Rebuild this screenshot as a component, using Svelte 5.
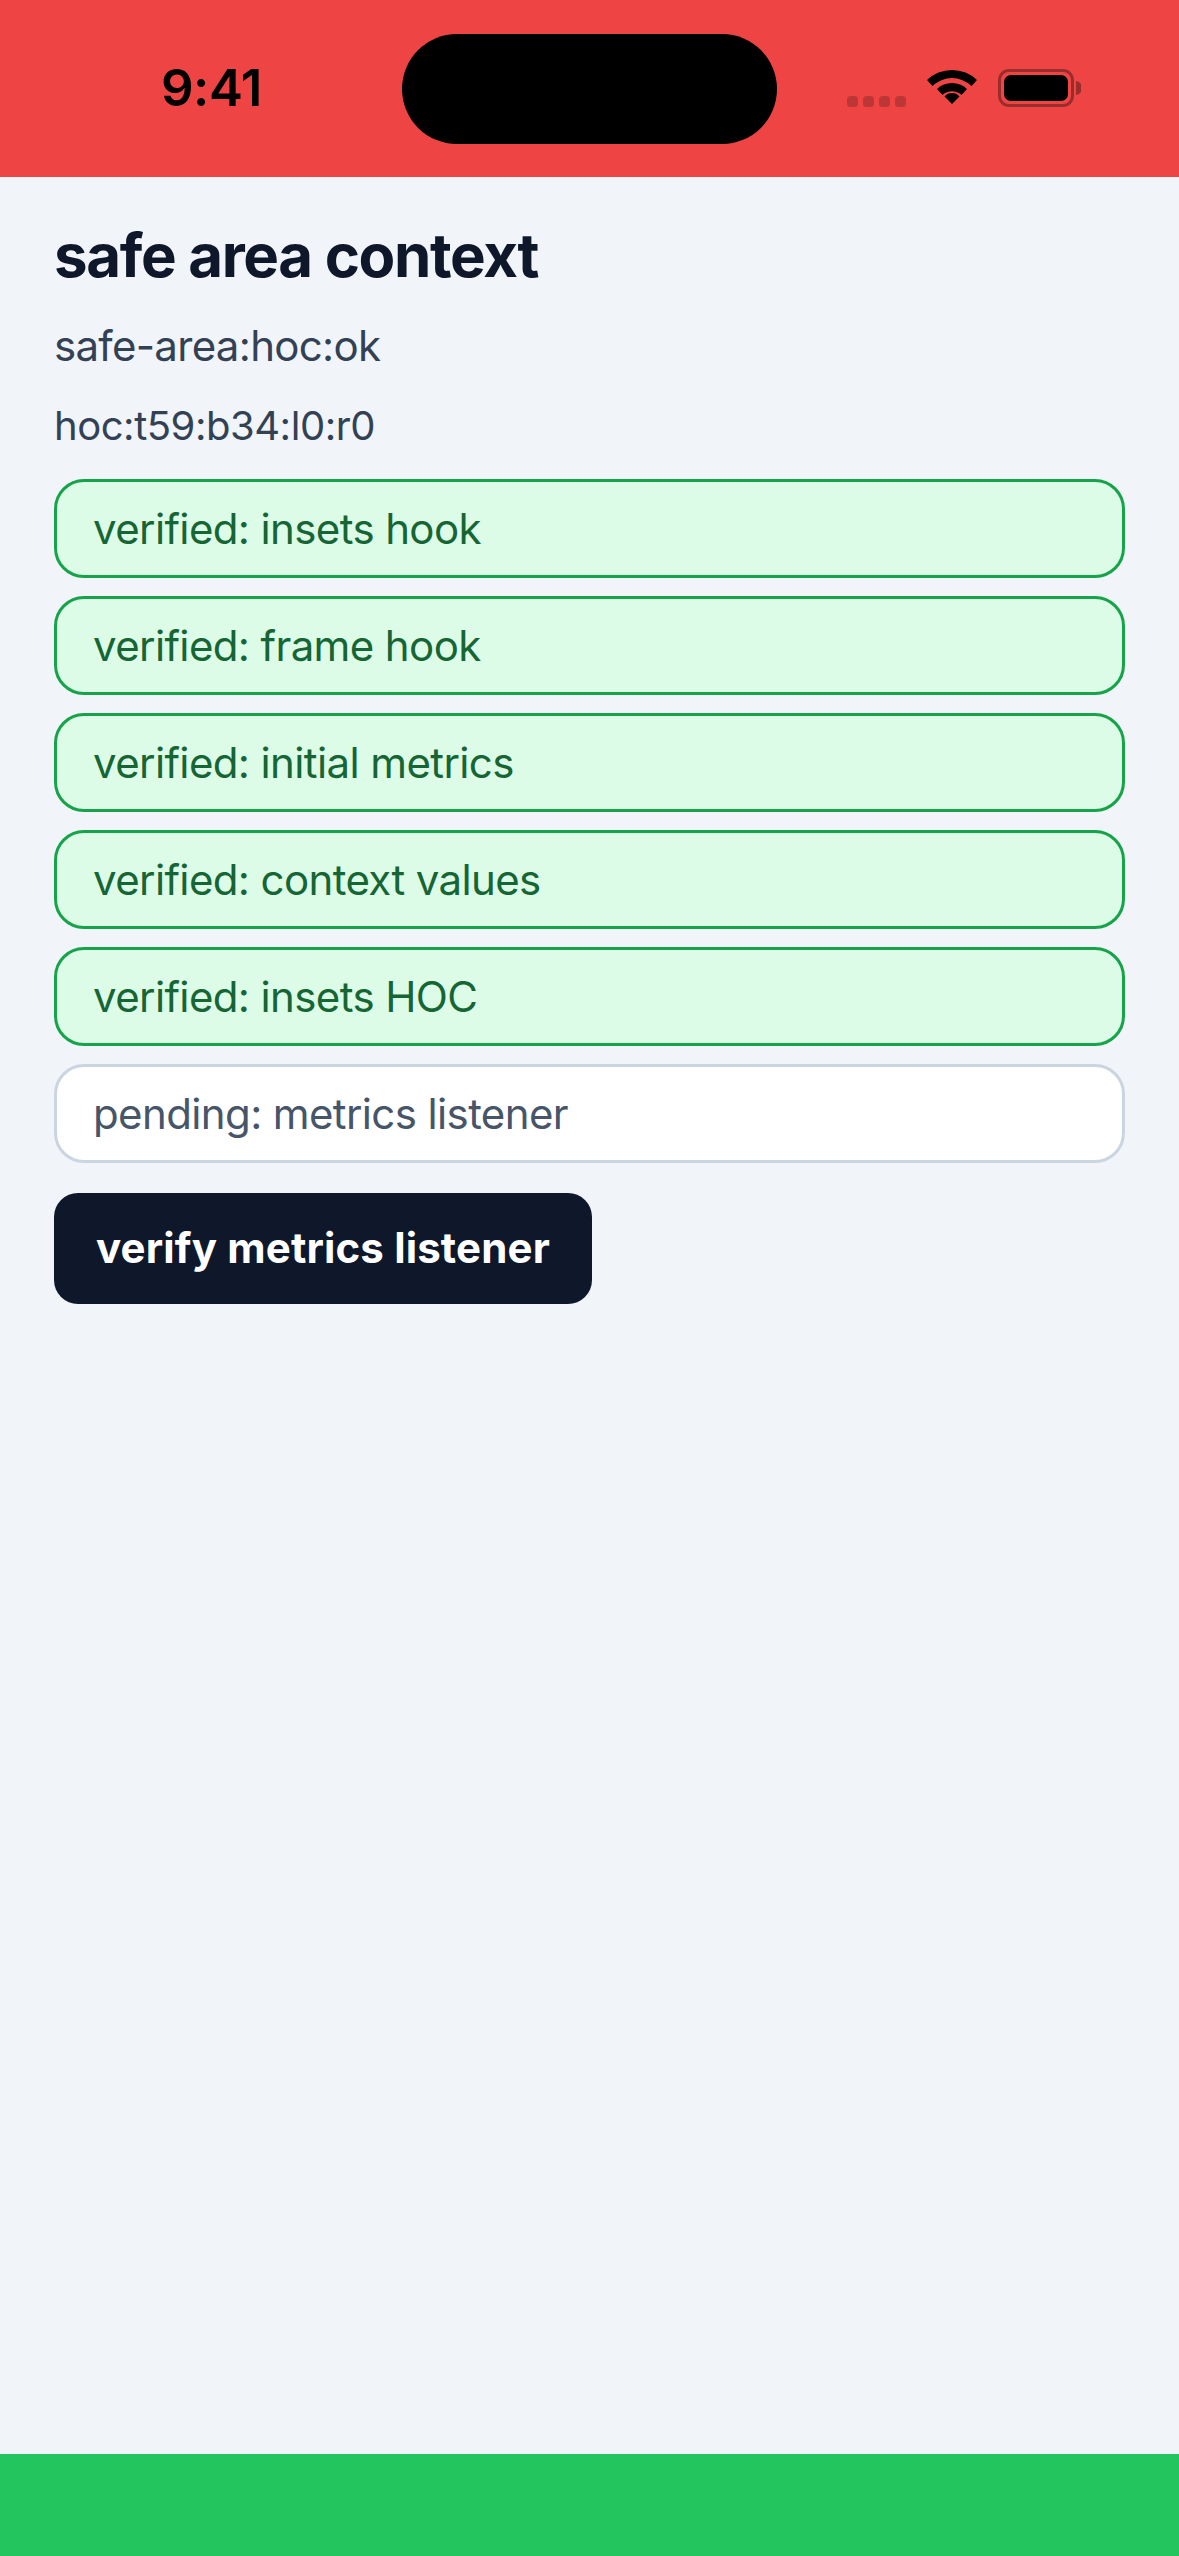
<script>
  const verified = ['insets hook', 'frame hook', 'initial metrics', 'context values', 'insets HOC'];
</script>

<div class="screen">
  <header class="statusbar">
    <span class="time">9:41</span>
    <div class="island"></div>
    <div class="status-icons">
      <div class="dots"><i></i><i></i><i></i><i></i></div>
      <svg class="wifi" viewBox="0 0 50 36" width="50" height="36">
        <path d="M0 12 A36 36 0 0 1 50 12 L44.5 18 A28 28 0 0 0 5.500 18 Z" fill="#000"/>
        <path d="M10 23 A22 22 0 0 1 40 23 L34.500 29 A14 14 0 0 0 15.500 29 Z" fill="#000" transform="translate(0 -2)"/>
        <path d="M25 36 L17.500 28.500 A10 10 0 0 1 32.500 28.500 Z" fill="#000"/>
      </svg>
      <div class="battery">
        <div class="battery-body"><div class="battery-fill"></div></div>
        <svg class="battery-cap" viewBox="0 0 5 14" width="5" height="14"><path d="M0 0 A6 7 0 0 1 0 14 Z" fill="#000" fill-opacity="0.35"/></svg>
      </div>
    </div>
  </header>

  <main class="content">
    <h1>safe area context</h1>
    <p class="line first">safe-area:hoc:ok</p>
    <p class="line second">hoc:t59:b34:l0:r0</p>
    <div class="rows">
      {#each verified as item}
        <div class="row ok">verified: {item}</div>
      {/each}
      <div class="row pending">pending: metrics listener</div>
    </div>
    <button class="action">verify metrics listener</button>
  </main>

  <footer class="bottom"></footer>
</div>

<style>
  :global(body) {
    margin: 0;
    background: #f1f5f9;
  }
  .screen {
    width: 1179px;
    height: 2556px;
    display: flex;
    flex-direction: column;
    font-family: Inter, "Liberation Sans", sans-serif;
    background: #f1f5f9;
    overflow: hidden;
  }
  .statusbar {
    height: 177px;
    flex: none;
    background: #ef4444;
    position: relative;
    display: flex;
    align-items: center;
    justify-content: space-between;
    box-sizing: border-box;
    padding: 0 98px 2px 161px;
  }
  .time {
    font-size: 51px;
    font-weight: 600;
    color: #000;
    letter-spacing: -0.5px;
  }
  .island {
    position: absolute;
    left: 402px;
    top: 34px;
    width: 375px;
    height: 110px;
    border-radius: 55px;
    background: #000;
  }
  .status-icons {
    display: flex;
    align-items: center;
    gap: 21px;
  }
  .dots {
    display: flex;
    gap: 5px;
    margin-top: 28px;
  }
  .dots i {
    display: block;
    width: 11px;
    height: 11px;
    border-radius: 3.500px;
    background: rgba(0, 0, 0, 0.2);
  }
  .wifi {
    margin-top: -4px;
  }
  .battery {
    display: flex;
    align-items: center;
    gap: 2px;
  }
  .battery-body {
    width: 76px;
    height: 38px;
    box-sizing: border-box;
    border: 3px solid rgba(0, 0, 0, 0.35);
    border-radius: 11px;
    padding: 3px;
  }
  .battery-fill {
    height: 100%;
    background: #000;
    border-radius: 7px;
  }
  .content {
    flex: 1;
    box-sizing: border-box;
    padding: 0 54px;
  }
  h1 {
    margin: 0;
    padding-top: 42px;
    font-size: 60px;
    line-height: 72px;
    font-weight: 700;
    color: #0f172a;
    letter-spacing: -1.350px;
  }
  .line {
    margin: 0;
    line-height: 60px;
    color: #334155;
  }
  .first {
    margin-top: 25px;
    font-size: 42px;
    letter-spacing: -0.700px;
  }
  .second {
    margin-top: 20px;
    font-size: 40px;
    letter-spacing: -0.470px;
  }
  .rows {
    margin-top: 23px;
    display: flex;
    flex-direction: column;
    gap: 18px;
  }
  .row {
    box-sizing: border-box;
    height: 99px;
    display: flex;
    align-items: center;
    padding: 0 36px;
    border: 3px solid;
    border-radius: 30px;
    font-size: 42px;
    letter-spacing: -0.620px;
  }
  .ok {
    background: #dcfce7;
    border-color: #16a34a;
    color: #166534;
  }
  .pending {
    background: #fff;
    border-color: #cbd5e1;
    color: #475569;
  }
  .action {
    display: block;
    margin-top: 30px;
    height: 111px;
    padding: 0 42px 2px;
    border: 0;
    border-radius: 24px;
    background: #0f172a;
    color: #fff;
    font-family: inherit;
    font-size: 42px;
    font-weight: 700;
    letter-spacing: 0.150px;
  }
  .bottom {
    height: 102px;
    flex: none;
    background: #22c55e;
  }
</style>
